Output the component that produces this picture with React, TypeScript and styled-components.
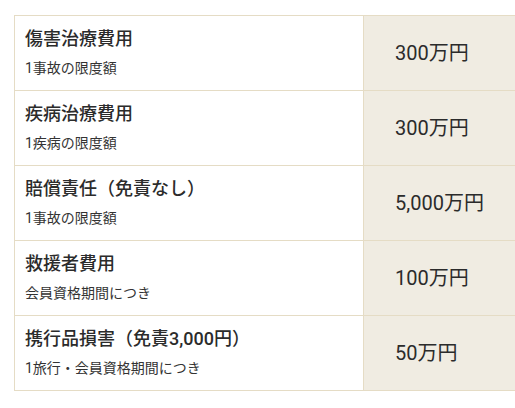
import React from "react";
import styled, { createGlobalStyle } from "styled-components";

const Global = createGlobalStyle`
  html, body {
    margin: 0;
    padding: 0;
    background: #ffffff;
    overflow: hidden;
  }
  body {
    font-family: Roboto, "Noto Sans CJK JP", sans-serif;
    color: #333333;
  }
`;

const Page = styled.div`
  padding: 15px 0 0 14px;
  width: 515px;
  box-sizing: border-box;
`;

const Table = styled.div`
  display: grid;
  grid-template-columns: 350px 1fr;
  border-top: 1px solid #e5dcc5;
`;

const LabelCell = styled.div`
  box-sizing: border-box;
  height: 75px;
  padding: 10px 10px 0 10px;
  border-left: 1px solid #e5dcc5;
  border-right: 1px solid #e5dcc5;
  border-bottom: 1px solid #e5dcc5;
  display: flex;
  flex-direction: column;
  gap: 6px;
`;

const Title = styled.div`
  font-size: 18px;
  line-height: 26px;
  font-weight: 500;
  color: #2b2b2b;
  white-space: nowrap;
`;

const Note = styled.div`
  font-size: 14px;
  line-height: 20px;
  color: #333333;
  white-space: nowrap;
`;

const ValueCell = styled.div`
  box-sizing: border-box;
  height: 75px;
  background: #f0ece2;
  border-bottom: 1px solid #e5dcc5;
  display: flex;
  align-items: center;
  padding: 0 0 4px 31px;
  font-size: 20px;
  color: #2b2b2b;
  white-space: nowrap;
`;

const rows = [
  { title: "傷害治療費用", note: "1事故の限度額", value: "300万円" },
  { title: "疾病治療費用", note: "1疾病の限度額", value: "300万円" },
  { title: "賠償責任（免責なし）", note: "1事故の限度額", value: "5,000万円" },
  { title: "救援者費用", note: "会員資格期間につき", value: "100万円" },
  { title: "携行品損害（免責3,000円）", note: "1旅行・会員資格期間につき", value: "50万円" },
];

export default function App() {
  return (
    <>
      <Global />
      <Page>
        <Table>
          {rows.map((r) => (
            <React.Fragment key={r.title}>
              <LabelCell>
                <Title>{r.title}</Title>
                <Note>{r.note}</Note>
              </LabelCell>
              <ValueCell>{r.value}</ValueCell>
            </React.Fragment>
          ))}
        </Table>
      </Page>
    </>
  );
}
